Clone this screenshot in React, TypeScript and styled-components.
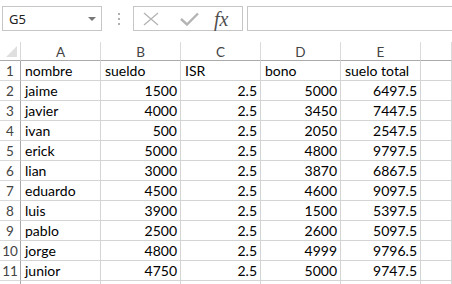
import React from 'react';
import styled, { createGlobalStyle } from 'styled-components';

const GlobalStyle = createGlobalStyle`
    html, body {
        margin: 0;
        padding: 0;
        background: #fff;
        overflow: hidden;
    }
`;

const COLS = ['A', 'B', 'C', 'D', 'E'];

type Row = [string, number, number, number, number];

const rows: Row[] = [
    ['jaime', 1500, 2.5, 5000, 6497.5],
    ['javier', 4000, 2.5, 3450, 7447.5],
    ['ivan', 500, 2.5, 2050, 2547.5],
    ['erick', 5000, 2.5, 4800, 9797.5],
    ['lian', 3000, 2.5, 3870, 6867.5],
    ['eduardo', 4500, 2.5, 4600, 9097.5],
    ['luis', 3900, 2.5, 1500, 5397.5],
    ['pablo', 2500, 2.5, 2600, 5097.5],
    ['jorge', 4800, 2.5, 4999, 9796.5],
    ['junior', 4750, 2.5, 5000, 9747.5]
];

const Page = styled.div`
    width: 452px;
    height: 284px;
    overflow: hidden;
    font-family: 'Noto Sans', sans-serif;
`;

const Toolbar = styled.div`
    display: flex;
    align-items: flex-start;
    height: 42px;
    padding: 6px 0 0 2px;
    box-sizing: border-box;
`;

const NameBox = styled.div`
    position: relative;
    width: 100px;
    height: 25px;
    box-sizing: border-box;
    border: 1px solid #c6c6c6;
    display: flex;
    align-items: center;
    padding-left: 6px;
    font-size: 13px;
    color: #222;
`;

const DropArrow = styled.span`
    position: absolute;
    right: 5px;
    top: 10px;
    width: 0;
    height: 0;
    border-left: 4px solid transparent;
    border-right: 4px solid transparent;
    border-top: 4px solid #777;
`;

const Dots = styled.div`
    display: flex;
    flex-direction: column;
    gap: 3px;
    margin: 7px 13px 0 16px;
    span {
        width: 2px;
        height: 2px;
        background: #b0b0b0;
    }
`;

const ButtonGroup = styled.div`
    width: 110px;
    height: 25px;
    box-sizing: border-box;
    border: 1px solid #c6c6c6;
    display: flex;
    align-items: center;
    padding-left: 9px;
`;

const IconSlot = styled.div<{ $w: number }>`
    width: ${p => p.$w}px;
    display: flex;
    align-items: center;
`;

const Fx = styled.span`
    font-family: 'Liberation Serif', serif;
    font-style: italic;
    font-size: 20px;
    color: #505050;
    line-height: 1;
`;

const FormulaInput = styled.div`
    flex: 1;
    height: 25px;
    margin-left: 4px;
    margin-right: -10px;
    box-sizing: border-box;
    border: 1px solid #c6c6c6;
`;

const Sheet = styled.div`
    display: grid;
    grid-template-columns: 21px repeat(5, 80px) 1fr;
    grid-auto-rows: 20px;
    grid-template-rows: 19px;
    font-family: Lato, 'Liberation Sans', sans-serif;
`;

const Corner = styled.div`
    position: relative;
    border-right: 1px solid #d8d8d8;
    border-bottom: 1px solid #ababab;
    &::after {
        content: '';
        position: absolute;
        right: 3px;
        bottom: 3px;
        width: 0;
        height: 0;
        border-left: 11px solid transparent;
        border-bottom: 11px solid #dfdfdf;
    }
`;

const ColHead = styled.div`
    border-right: 1px solid #dadada;
    border-bottom: 1px solid #ababab;
    display: flex;
    align-items: center;
    justify-content: center;
    font-size: 13.5px;
    color: #444;
    padding-top: 1px;
`;

const RowHead = styled.div`
    border-right: 1px solid #a8a8a8;
    border-bottom: 1px solid #dadada;
    display: flex;
    align-items: flex-end;
    justify-content: center;
    font-size: 13.5px;
    color: #444;
    line-height: 17px;
`;

const Cell = styled.div<{ $num?: boolean }>`
    border-right: 1px solid #d4d4d4;
    border-bottom: 1px solid #d4d4d4;
    display: flex;
    align-items: flex-end;
    justify-content: ${p => (p.$num ? 'flex-end' : 'flex-start')};
    padding: 0 3px 0 4px;
    font-size: 14px;
    line-height: 18px;
    color: #000;
    white-space: nowrap;
    overflow: hidden;
`;

function XIcon() {
    return (
        <svg width="16" height="14" viewBox="0 0 16 14">
            <path d="M1 1 L15 13 M15 1 L1 13" stroke="#b4b4b4" strokeWidth="1.3" fill="none" />
        </svg>
    );
}

function CheckIcon() {
    return (
        <svg width="19" height="14" viewBox="0 0 19 14">
            <path d="M1 7 L7 12.5 L18 1.5" stroke="#b4b4b4" strokeWidth="2.4" fill="none" />
        </svg>
    );
}

export default function App() {
    const data: (string | number)[][] = [['nombre', 'sueldo', 'ISR', 'bono', 'suelo total'], ...rows];
    return (
        <Page>
            <GlobalStyle />
            <Toolbar>
                <NameBox>
                    G5
                    <DropArrow />
                </NameBox>
                <Dots>
                    <span />
                    <span />
                    <span />
                </Dots>
                <ButtonGroup>
                    <IconSlot $w={37}>
                        <XIcon />
                    </IconSlot>
                    <IconSlot $w={34}>
                        <CheckIcon />
                    </IconSlot>
                    <IconSlot $w={24}>
                        <Fx>fx</Fx>
                    </IconSlot>
                </ButtonGroup>
                <FormulaInput />
            </Toolbar>
            <Sheet>
                <Corner />
                {COLS.map(c => (
                    <ColHead key={c}>{c}</ColHead>
                ))}
                <ColHead />
                {[...data, ['', '', '', '', '']].map((r, i) => (
                    <React.Fragment key={i}>
                        <RowHead>{i < data.length ? i + 1 : ''}</RowHead>
                        {r.map((v, j) => (
                            <Cell key={j} $num={typeof v === 'number'}>
                                {v}
                            </Cell>
                        ))}
                        <Cell />
                    </React.Fragment>
                ))}
            </Sheet>
        </Page>
    );
}
